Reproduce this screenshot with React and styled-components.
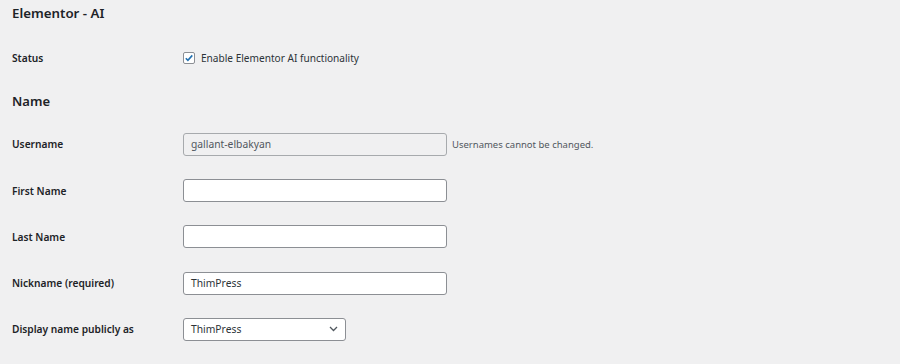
import styled, { createGlobalStyle } from 'styled-components'

const GlobalStyle = createGlobalStyle`
  body {
    margin: 0;
    background: #f0f0f1;
    font-family: "Noto Sans", "Open Sans", sans-serif;
    color: #1d2327;
  }
`

const Page = styled.div`
  padding: 0 12px;
  width: 876px;
  height: 364px;
`

const Title = styled.h2`
  margin: 0;
  font-size: 13.3px;
  font-weight: 600;
  line-height: 26px;
`

const SectionTitle = styled.h3`
  margin: 0;
  height: 40px;
  display: flex;
  align-items: center;
  font-size: 13px;
  font-weight: 600;
`

const Row = styled.div`
  display: grid;
  grid-template-columns: 171px 1fr;
  align-items: center;
  height: ${p => p.$h || 46.25}px;
  margin-top: ${p => p.$top || 0}px;
`

const Label = styled.label`
  font-size: 10.2px;
  font-weight: 600;
`

const Field = styled.div`
  display: flex;
  align-items: center;
  gap: ${p => p.$gap ?? 5}px;
`

const Input = styled.div`
  box-sizing: border-box;
  width: ${p => p.$w || 264}px;
  height: 23px;
  padding: 0 7px;
  display: flex;
  align-items: center;
  justify-content: space-between;
  border: 1px solid ${p => (p.$disabled ? '#a7aaad' : '#8c8f94')};
  border-radius: 3px;
  background: ${p => (p.$disabled ? '#f0f0f1' : '#fff')};
  color: ${p => (p.$disabled ? '#50575e' : '#2c3338')};
  font-size: 10.3px;
`

const Description = styled.span`
  font-size: 9.5px;
  color: #50575e;
`

const Check = styled.span`
  box-sizing: border-box;
  width: 12px;
  height: 12px;
  border: 1px solid #8c8f94;
  border-radius: 2px;
  background: #fff;
  display: inline-flex;
  align-items: center;
  justify-content: center;
`

const CheckText = styled.span`
  font-size: 10.1px;
  color: #2c3338;
`

function Chevron() {
  return (
    <svg width="9" height="6" viewBox="0 0 9 6" fill="none">
      <path d="M1 1l3.5 3.5L8 1" stroke="#50575e" strokeWidth="1.3" />
    </svg>
  )
}

export default function App() {
  return (
    <Page>
      <GlobalStyle />
      <Title>Elementor - AI</Title>
      <Row $top={9}>
        <Label>Status</Label>
        <Field $gap={6}>
          <Check>
            <svg width="10" height="10" viewBox="0 0 10 10" fill="none">
              <path d="M1.8 5.2l2.1 2.2L8.3 2.4" stroke="#2271b1" strokeWidth="1.6" />
            </svg>
          </Check>
          <CheckText>Enable Elementor AI functionality</CheckText>
        </Field>
      </Row>
      <SectionTitle>Name</SectionTitle>
      <Row>
        <Label>Username</Label>
        <Field>
          <Input $disabled>gallant-elbakyan</Input>
          <Description>Usernames cannot be changed.</Description>
        </Field>
      </Row>
      <Row>
        <Label>First Name</Label>
        <Field><Input /></Field>
      </Row>
      <Row>
        <Label>Last Name</Label>
        <Field><Input /></Field>
      </Row>
      <Row>
        <Label>Nickname (required)</Label>
        <Field><Input>ThimPress</Input></Field>
      </Row>
      <Row>
        <Label>Display name publicly as</Label>
        <Field>
          <Input $w={163}>ThimPress<Chevron /></Input>
        </Field>
      </Row>
    </Page>
  )
}
